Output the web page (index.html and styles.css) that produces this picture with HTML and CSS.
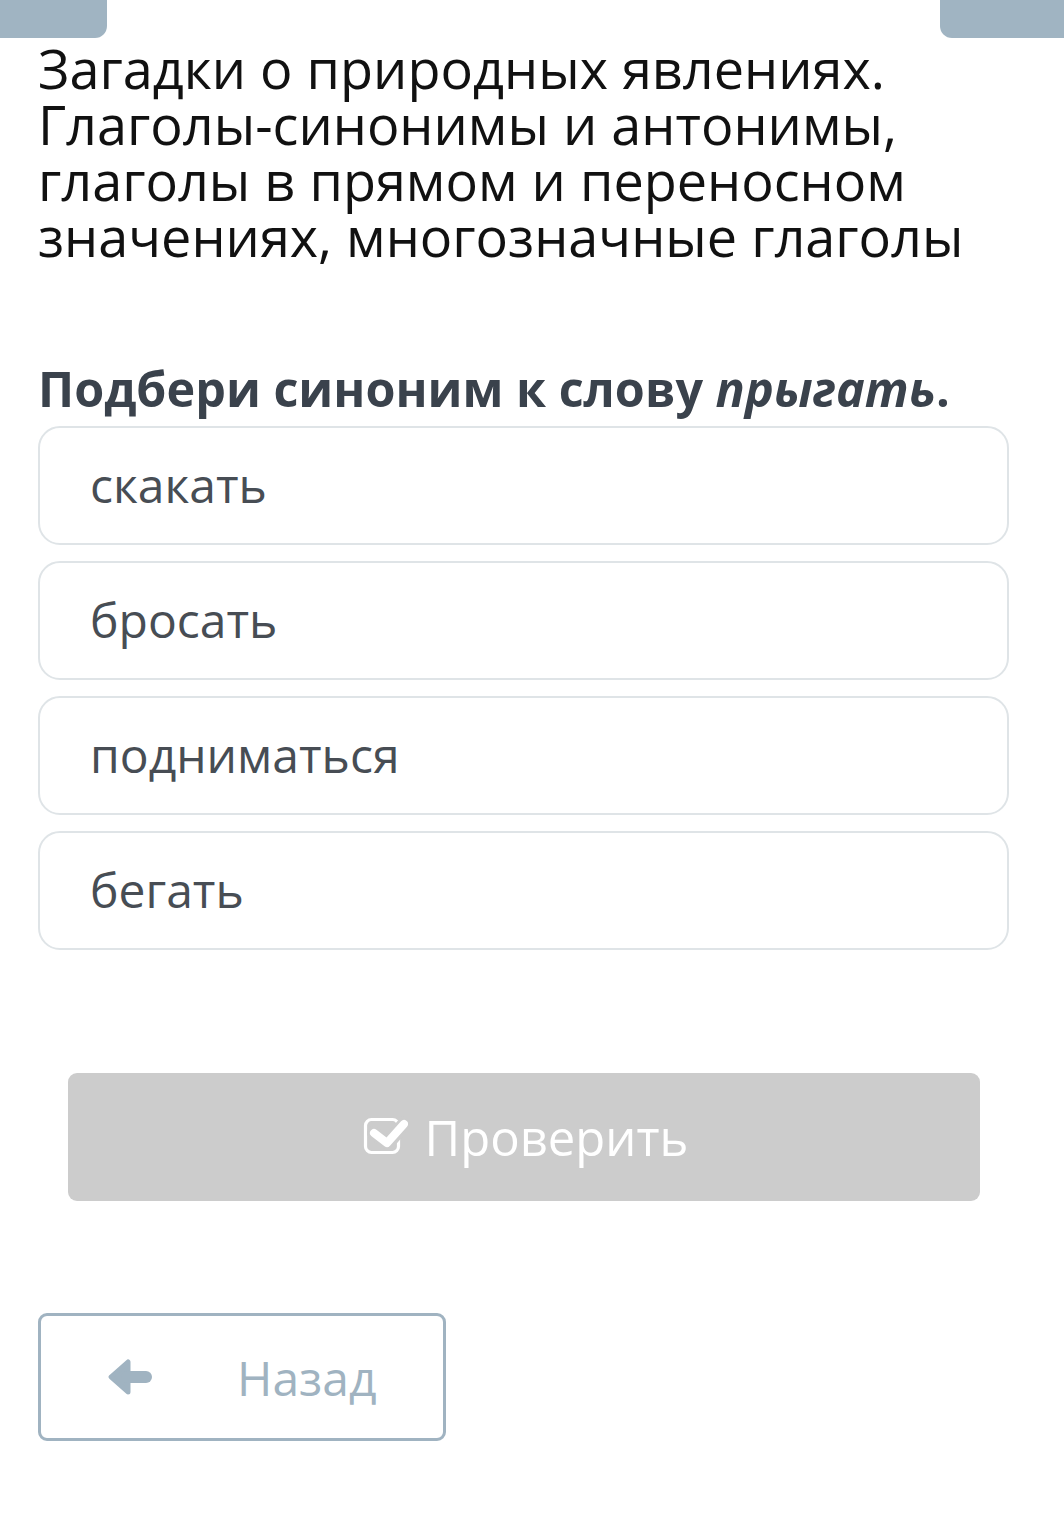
FILE: index.html
```html
<!DOCTYPE html>
<html lang="ru">
<head>
<meta charset="utf-8">
<link rel="stylesheet" href="styles.css">
</head>
<body>
<div class="tabs">
  <div class="tab tab-left"></div>
  <div class="tab tab-right"></div>
</div>
<main class="page">
  <h1 class="title">Загадки о природных явлениях. Глаголы-синонимы и антонимы, глаголы в прямом и переносном значениях, многозначные глаголы</h1>
  <p class="question">Подбери синоним к слову <em>прыгать</em>.</p>
  <div class="options">
    <div class="option">скакать</div>
    <div class="option">бросать</div>
    <div class="option">подниматься</div>
    <div class="option">бегать</div>
  </div>
  <button class="check" type="button">
    <svg class="check-icon" viewBox="0 0 48 48" width="48" height="48" aria-hidden="true">
      <rect x="5.5" y="6.5" width="33" height="33" rx="6" fill="none" stroke="#fff" stroke-width="3.2"/>
      <path d="M14 20 L28 30 L45 10" fill="none" stroke="#cccccc" stroke-width="14" stroke-linecap="round" stroke-linejoin="round"/>
      <path d="M14 20 L27 30 L44 11" fill="none" stroke="#fff" stroke-width="8" stroke-linecap="round" stroke-linejoin="round"/>
    </svg>
    <span>Проверить</span>
  </button>
  <button class="back" type="button">
    <svg class="back-icon" viewBox="0 0 46 40" width="46" height="40" aria-hidden="true">
      <path d="M4 20 L21 5 L21 35 Z" fill="#a0b3c1" stroke="#a0b3c1" stroke-width="5" stroke-linejoin="round"/>
      <path d="M20 20 H39" stroke="#a0b3c1" stroke-width="12" stroke-linecap="round"/>
    </svg>
    <span>Назад</span>
  </button>
</main>
</body>
</html>
```
FILE: styles.css
```css
html, body {
  margin: 0;
  padding: 0;
  background: #fff;
}
body {
  font-family: "Open Sans", "Noto Sans", sans-serif;
  width: 1064px;
  height: 1530px;
  overflow: hidden;
}
.tabs {
  display: flex;
  justify-content: space-between;
  height: 38px;
}
.tab {
  background: #a0b4c2;
  height: 38px;
}
.tab-left {
  width: 107px;
  border-bottom-right-radius: 12px;
}
.tab-right {
  width: 124px;
  border-bottom-left-radius: 12px;
}
.page {
  padding: 0 38px;
  display: flex;
  flex-direction: column;
}
.title {
  margin: 2px 0 0;
  font-weight: 400;
  font-size: 54px;
  line-height: 56px;
  color: #111;
}
.question {
  margin: 96px 0 10px;
  font-weight: 700;
  font-size: 48.5px;
  line-height: 56px;
  color: #3a424c;
}
.question em {
  font-style: italic;
}
.options {
  display: flex;
  flex-direction: column;
  gap: 16px;
  width: 971px;
}
.option {
  box-sizing: border-box;
  height: 119px;
  border: 2px solid #dfe4e7;
  border-radius: 22px;
  padding: 0 50px 2px;
  display: flex;
  align-items: center;
  font-size: 48px;
  color: #474d54;
}
.check {
  margin: 123px 0 0 30px;
  width: 912px;
  height: 128px;
  background: #cccccc;
  border: none;
  border-radius: 9px;
  color: #fff;
  font-family: inherit;
  font-size: 49px;
  display: flex;
  align-items: center;
  justify-content: center;
  gap: 17px;
  padding: 0;
}
.check-icon {
  display: block;
}
.back {
  margin: 112px 0 0;
  width: 408px;
  height: 128px;
  box-sizing: border-box;
  background: #fff;
  border: 3px solid #a0b3c1;
  border-radius: 9px;
  color: #a0b3c1;
  font-family: inherit;
  font-size: 48px;
  display: flex;
  align-items: center;
  padding: 0 0 0 66px;
  gap: 84px;
}
.back-icon {
  display: block;
}
```
